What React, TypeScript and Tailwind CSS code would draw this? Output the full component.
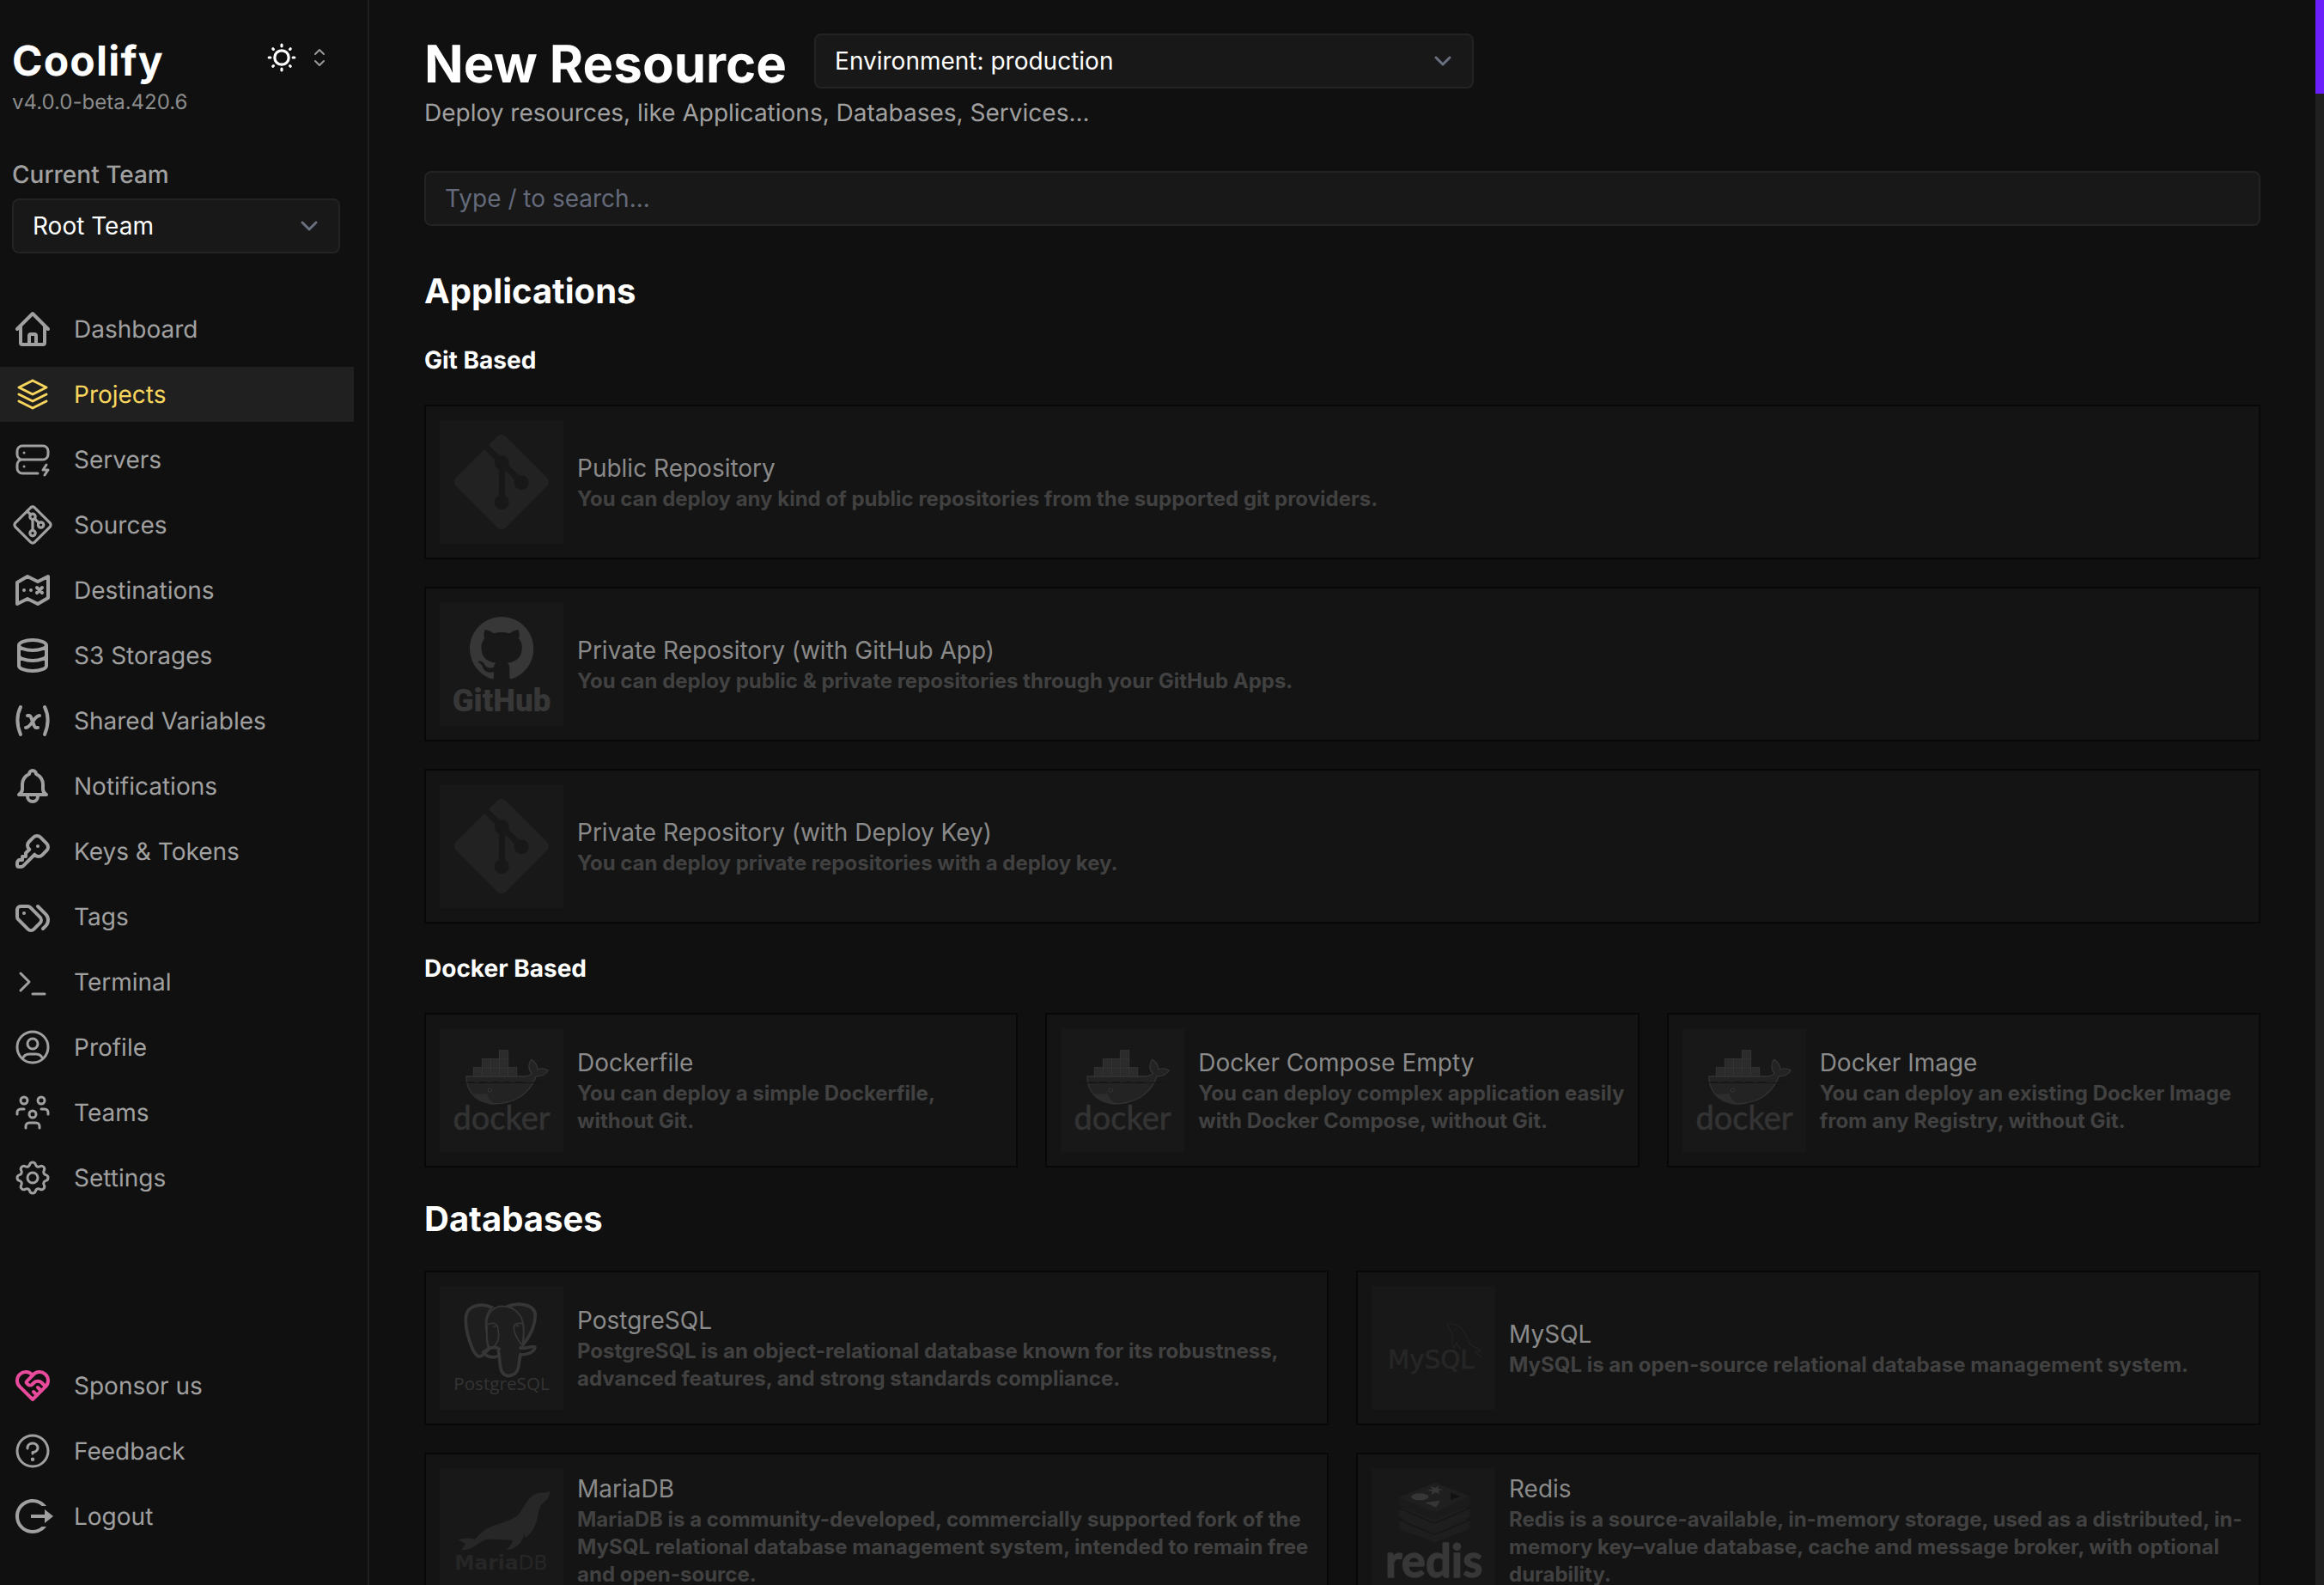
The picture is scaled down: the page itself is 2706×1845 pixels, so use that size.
import type { ReactNode } from "react";
import { SiGit, SiGithub } from "react-icons/si";
import { PiQuestion } from "react-icons/pi";
import { RiLogoutCircleRLine } from "react-icons/ri";
import { TbHeartHandshake, TbSettings } from "react-icons/tb";

function Glyph({ stroke = 2, box = 24, children }: { stroke?: number; box?: number; children: ReactNode }) {
  return (
    <svg
      viewBox={`0 0 ${box} ${box}`}
      className="size-12 shrink-0"
      fill="none"
      stroke="currentColor"
      strokeWidth={stroke}
      strokeLinecap="round"
      strokeLinejoin="round"
      aria-hidden="true"
    >
      {children}
    </svg>
  );
}

const mainLinks: { label: string; icon: ReactNode; active?: boolean }[] = [
  {
    label: "Dashboard",
    icon: (
      <Glyph>
        <path d="M3 12l2-2m0 0l7-7 7 7M5 10v10a1 1 0 001 1h3m10-11l2 2m-2-2v10a1 1 0 01-1 1h-3m-6 0a1 1 0 001-1v-4a1 1 0 011-1h2a1 1 0 011 1v4a1 1 0 001 1m-6 0h6" />
      </Glyph>
    ),
  },
  {
    label: "Projects",
    active: true,
    icon: (
      <Glyph stroke={1.5}>
        <path d="M12 4L4 8l8 4l8-4l-8-4M4 12l8 4l8-4M4 16l8 4l8-4" />
      </Glyph>
    ),
  },
  {
    label: "Servers",
    icon: (
      <Glyph stroke={1.5}>
        <path d="M3 7a3 3 0 0 1 3-3h12a3 3 0 0 1 3 3v2a3 3 0 0 1-3 3H6a3 3 0 0 1-3-3zm12 13H6a3 3 0 0 1-3-3v-2a3 3 0 0 1 3-3h12M7 8v.01M7 16v.01M20 15l-2 3h3l-2 3" />
      </Glyph>
    ),
  },
  {
    label: "Sources",
    icon: (
      <Glyph stroke={1} box={15}>
        <path d="M6.793 1.207L1.207 6.793a1 1 0 0 0 0 1.414l5.586 5.586a1 1 0 0 0 1.414 0l5.586-5.586a1 1 0 0 0 0-1.414L8.207 1.207a1 1 0 0 0-1.414 0z" />
        <path d="M5.5 2.5l1.3 1.3M8.2 5.2l1.6 1.6M7.5 5.5v4" />
        <circle cx="7.5" cy="4.5" r="1" />
        <circle cx="10.5" cy="7.5" r="1" />
        <circle cx="7.5" cy="10.5" r="1" />
      </Glyph>
    ),
  },
  {
    label: "Destinations",
    icon: (
      <Glyph>
        <path d="M9 4L3 7.5V20l6-3l6 3l6-3.5V4l-6 3zM7 12v.01M11 12v.01M14.5 10.5l3 3M17.5 10.5l-3 3" />
      </Glyph>
    ),
  },
  {
    label: "S3 Storages",
    icon: (
      <Glyph>
        <path d="M4 6a8 3 0 1 0 16 0a8 3 0 1 0-16 0M4 6v6a8 3 0 0 0 16 0V6M4 12v6a8 3 0 0 0 16 0v-6" />
      </Glyph>
    ),
  },
  {
    label: "Shared Variables",
    icon: (
      <Glyph>
        <path d="M5 4C2.5 9 2.5 14 5 20M19 4c2.5 5 2.5 10 0 16M9 9h1c1 0 1 1 2.016 3.527C13 15 13 16 14 16h1M8 16c1.5 0 3-2 4-3.5S14.5 9 16 9" />
      </Glyph>
    ),
  },
  {
    label: "Notifications",
    icon: (
      <Glyph>
        <path d="M10 5a2 2 0 1 1 4 0a7 7 0 0 1 4 6v3a4 4 0 0 0 2 3H4a4 4 0 0 0 2-3v-3a7 7 0 0 1 4-6M9 17v1a3 3 0 0 0 6 0v-1" />
      </Glyph>
    ),
  },
  {
    label: "Keys & Tokens",
    icon: (
      <Glyph>
        <path d="M16.555 3.843l3.602 3.602a2.877 2.877 0 0 1 0 4.069l-2.643 2.643a2.877 2.877 0 0 1-4.069 0l-.301-.301-6.558 6.558a2 2 0 0 1-1.239.578L5.172 21H4a1 1 0 0 1-.993-.883L3 20v-1.172a2 2 0 0 1 .467-1.284l.119-.13L4 17h2v-2h2v-2l2.144-2.144-.301-.301a2.877 2.877 0 0 1 0-4.069l2.643-2.643a2.877 2.877 0 0 1 4.069 0zM15 9h.01" />
      </Glyph>
    ),
  },
  {
    label: "Tags",
    icon: (
      <Glyph>
        <path d="M3 8v4.172a2 2 0 0 0 .586 1.414l5.71 5.71a2.41 2.41 0 0 0 3.408 0l3.592-3.592a2.41 2.41 0 0 0 0-3.408l-5.71-5.71A2 2 0 0 0 9.172 6H5a2 2 0 0 0-2 2M18 19l1.592-1.592a4.82 4.82 0 0 0 0-6.816L15 6M7 10h-.01" />
      </Glyph>
    ),
  },
  {
    label: "Terminal",
    icon: (
      <Glyph stroke={1.5}>
        <path d="M5 7l5 5l-5 5M12 19h7" />
      </Glyph>
    ),
  },
  {
    label: "Profile",
    icon: (
      <Glyph stroke={1.5}>
        <path d="M3 12a9 9 0 1 0 18 0a9 9 0 1 0-18 0M9 10a3 3 0 1 0 6 0a3 3 0 1 0-6 0M6.168 18.849A4 4 0 0 1 10 16h4a4 4 0 0 1 3.834 2.855" />
      </Glyph>
    ),
  },
  {
    label: "Teams",
    icon: (
      <Glyph stroke={1.5}>
        <path d="M10 13a2 2 0 1 0 4 0a2 2 0 0 0-4 0M8 21v-1a2 2 0 0 1 2-2h4a2 2 0 0 1 2 2v1M15 5a2 2 0 1 0 4 0a2 2 0 0 0-4 0M17 10h2a2 2 0 0 1 2 2v1M5 5a2 2 0 1 0 4 0a2 2 0 0 0-4 0M3 13v-1a2 2 0 0 1 2-2h2" />
      </Glyph>
    ),
  },
  { label: "Settings", icon: <TbSettings strokeWidth={1.5} className="size-12 shrink-0" /> },
];

const footerLinks: { label: string; icon: ReactNode; active?: boolean }[] = [
  { label: "Sponsor us", icon: <TbHeartHandshake strokeWidth={2} className="size-12 shrink-0 text-[#e84a9c]" /> },
  { label: "Feedback", icon: <PiQuestion className="size-12 shrink-0" /> },
  { label: "Logout", icon: <RiLogoutCircleRLine className="size-12 shrink-0" /> },
];

function NavList({ items }: { items: typeof mainLinks }) {
  return (
    <ul className="flex flex-col gap-3">
      {items.map((item) => (
        <li key={item.label}>
          <a
            href="#"
            aria-current={item.active ? "page" : undefined}
            className={
              item.active
                ? "flex h-16 items-center gap-6 bg-[#202020] pl-3.5 text-[#f8d65e]"
                : "flex h-16 items-center gap-6 pl-3.5 text-[#a0a0a0]"
            }
          >
            {item.icon}
            {item.label}
          </a>
        </li>
      ))}
    </ul>
  );
}

function SelectBox({ id, value, label }: { id: string; value: string; label?: string }) {
  return (
    <div className="relative">
      <select
        id={id}
        aria-label={label}
        className="h-16 w-full appearance-none rounded-lg border-2 border-[#232323] bg-[#181818] pl-[22px] pr-16 text-white outline-none"
      >
        <option>{value}</option>
      </select>
      <svg
        viewBox="0 0 20 20"
        className="pointer-events-none absolute top-3 right-4 size-10 text-[#6b7080]"
        fill="none"
        stroke="currentColor"
        strokeWidth="1.5"
        strokeLinecap="round"
        strokeLinejoin="round"
        aria-hidden="true"
      >
        <path d="M6 8l4 4 4-4" />
      </svg>
    </div>
  );
}

function Sidebar() {
  return (
    <aside className="flex h-full w-[430px] shrink-0 flex-col border-r-2 border-[#202020] pt-[39px] pb-12">
      <div className="flex items-start justify-between pr-11 pl-3.5">
        <div>
          <p className="text-5xl leading-[64px] font-bold tracking-wide text-white">Coolify</p>
          <p className="text-2xl text-[#8c8c8c]">v4.0.0-beta.420.6</p>
        </div>
        <button type="button" aria-label="Theme" className="mt-2 flex items-center gap-3">
          <svg viewBox="0 0 40 40" className="size-10 text-white" fill="none" stroke="currentColor" strokeWidth="3.2" strokeLinecap="round">
            <circle cx="20" cy="20" r="8.2" />
            <path d="M20 5.2v1.6M20 33.2v1.6M5.2 20h1.6M33.2 20h1.6M9.8 9.8l.6.6M29.6 29.6l.6.6M9.8 30.2l.6-.6M29.6 10.4l.6-.6" />
          </svg>
          <svg viewBox="0 0 24 24" className="size-6 text-[#999999]" fill="none" stroke="currentColor" strokeWidth="2" strokeLinecap="round" strokeLinejoin="round">
            <path d="M7 8l5-5l5 5M7 16l5 5l5-5" />
          </svg>
        </button>
      </div>

      <div className="mt-12 flex flex-col gap-2 pr-8 pl-3.5">
        <label htmlFor="team" className="font-medium text-[#a0a0a0]">
          Current Team
        </label>
        <SelectBox id="team" value="Root Team" />
      </div>

      <nav className="mt-14 flex flex-1 flex-col justify-between pr-4">
        <NavList items={mainLinks} />
        <NavList items={footerLinks} />
      </nav>
    </aside>
  );
}

function Logo({ children }: { children: ReactNode }) {
  return (
    <svg viewBox="0 0 432 432" className="size-36 shrink-0 bg-[#181818]" aria-hidden="true">
      {children}
    </svg>
  );
}

const gitLogo = (
  <Logo>
    <SiGit x={51} y={51} size={330} color="#222222" />
  </Logo>
);

const githubLogo = (
  <Logo>
    <SiGithub x={105} y={48} size={223} color="#373737" />
    <text x="216" y="382" textAnchor="middle" fontFamily="Roboto, sans-serif" fontWeight="900" fontSize="110" fill="#373737">
      GitHub
    </text>
  </Logo>
);

const dockerCells: [number, number][] = [
  [118, 137], [148, 137], [178, 137], [208, 137], [238, 137],
  [148, 107], [178, 107], [208, 107],
  [208, 77],
];

const dockerLogo = (
  <Logo>
    <path
      d="M93 168H285Q310 168 322 158Q302 135 320 109Q341 122 342 144Q360 136 379 147Q366 168 336 168Q322 210 280 240Q240 264 184 264Q132 258 108 222Q92 196 93 168Z"
      fill="#232323"
      stroke="#333333"
      strokeWidth="4"
    />
    <path d="M110 229Q140 232 164 227Q170 250 192 262Q138 266 110 229Z" fill="#2d2d2d" />
    <path d="M56 192Q74 182 92 190Q112 182 128 190Q152 180 172 190Q194 180 214 190Q236 180 256 190Q278 182 300 190Q330 190 350 184L372 192Z" fill="#161616" />
    {dockerCells.map(([x, y]) => (
      <g key={`${x}-${y}`}>
        <rect x={x} y={y} width="31" height="31" fill="#2a2a2a" stroke="#353535" strokeWidth="3" />
        <path d={`M${x + 10} ${y + 5}v21M${x + 16} ${y + 5}v21M${x + 22} ${y + 5}v21`} stroke="#323232" strokeWidth="2" />
      </g>
    ))}
    <circle cx="175" cy="216" r="6" fill="#1a1a1a" stroke="#3a3a3a" strokeWidth="3" />
    <text x="216" y="354" textAnchor="middle" fontFamily="Lato, sans-serif" fontSize="114" fill="#333333" stroke="#333333" strokeWidth="2">
      docker
    </text>
  </Logo>
);

const postgresLogo = (
  <Logo>
    <g fill="#1e1e1e" stroke="#363636" strokeWidth="11" strokeLinecap="round" strokeLinejoin="round">
      <path d="M186 76C150 60 100 62 92 104C86 150 112 230 132 244C146 252 156 234 172 220L164 140C162 110 172 88 186 76Z" />
      <path d="M236 72C270 56 330 62 334 100C334 145 308 185 290 207L290 140C286 110 262 80 236 72Z" />
      <path d="M186 76C200 68 222 68 236 72C270 84 290 110 290 140C296 165 290 190 284 215V240C280 270 284 312 240 314C206 310 212 270 205 232L172 215L164 140C162 110 172 88 186 76Z" stroke="none" />
      <path d="M205 228C214 260 202 310 240 314C284 310 274 265 282 240" fill="none" />
      <path d="M282 216C300 222 320 206 333 213C330 234 300 240 282 239" fill="none" />
      <path d="M160 240C176 252 192 250 205 244M152 232L172 218Q196 210 208 220" fill="none" />
    </g>
    <g fill="none" stroke="#363636" strokeWidth="5" strokeLinecap="round">
      <path d="M174 213C154 190 170 170 164 135C162 95 190 72 216 70C262 70 290 105 291 135C296 165 290 185 289 207" />
      <path d="M164 136C182 126 204 124 205 160C210 190 198 198 190 212M292 131C264 126 258 136 259 150C264 180 278 195 288 206" />
      <path d="M188 141h8M268 139h8" />
    </g>
    <text x="216" y="364" textAnchor="middle" fontFamily="'Open Sans', sans-serif" fontSize="62" fill="#343434">
      PostgreSQL
    </text>
  </Logo>
);

const mysqlLogo = (
  <Logo>
    <g fill="none" stroke="#212121" strokeWidth="4" strokeLinecap="round" strokeLinejoin="round">
      <path d="M312 220C304 212 296 206 297 196C292 202 290 210 290 216C276 208 282 190 284 180C282 164 268 146 264 132C268 126 282 134 288 134C318 142 332 174 342 200C350 212 372 214 382 228C374 230 366 228 360 230C368 236 376 240 384 248" />
      <path d="M290 150l4 4" />
    </g>
    <text x="208" y="289" textAnchor="middle" fontFamily="'DejaVu Sans', sans-serif" fontSize="88" fill="#262626" stroke="#262626" strokeWidth="2">
      MySQL
    </text>
  </Logo>
);

const mariaLogo = (
  <Logo>
    <path
      d="M384 80C388 108 362 116 352 132C342 156 344 200 310 235L298 243Q298 238 296 230C288 262 262 286 232 285Q252 268 254 252C215 250 180 246 160 250C130 262 114 290 76 285L90 265L66 250Q90 240 122 248C140 235 150 212 190 200C240 184 268 174 280 155C300 125 315 92 345 86Q365 88 384 80Z"
      fill="#272727"
    />
    <text x="214" y="353" textAnchor="middle" fontFamily="'DejaVu Sans', sans-serif" fontSize="70" fill="#262626">
      <tspan fontWeight="700">Maria</tspan>
      <tspan fontWeight="400">DB</tspan>
    </text>
  </Logo>
);

const redisLogo = (
  <Logo>
    <path d="M96 184L222 142L343 184V212L230 256Q220 260 210 256L96 212Z" fill="#1e1e1e" />
    <path d="M96 180L210 228Q220 232 230 228L343 180" fill="none" stroke="#171717" strokeWidth="5" />
    <path d="M96 142L222 100L343 142V170L230 216Q220 220 210 216L96 170Z" fill="#1e1e1e" />
    <path d="M96 139L210 188Q220 192 230 188L343 139" fill="none" stroke="#171717" strokeWidth="5" />
    <path d="M96 101L212 54Q222 50 232 54L343 98V130L230 176Q220 180 210 176L96 130Z" fill="#1b1b1b" />
    <path d="M96 101L212 54Q222 50 232 54L343 98L230 150Q220 154 210 150Z" fill="#1f1f1f" />
    <ellipse cx="169" cy="100" rx="31" ry="12" fill="#363636" />
    <path d="M224 85l-16 8l4-11l-19-6l20-2l-6-10l15 5l13-7l-2 10l18 3l-17 4l4 12z" fill="#363636" />
    <path d="M186 120L240 113L225 137Z" fill="#363636" />
    <path d="M276 85L309 99L276 112Z" fill="#111111" />
    <text x="218" y="380" textAnchor="middle" fontFamily="Lato, sans-serif" fontWeight="700" fontSize="158" fill="#373737" stroke="#373737" strokeWidth="4" strokeLinejoin="round">
      redis
    </text>
  </Logo>
);

type Resource = { title: string; text: string; logo: ReactNode };

const gitBased: Resource[] = [
  { title: "Public Repository", text: "You can deploy any kind of public repositories from the supported git providers.", logo: gitLogo },
  { title: "Private Repository (with GitHub App)", text: "You can deploy public & private repositories through your GitHub Apps.", logo: githubLogo },
  { title: "Private Repository (with Deploy Key)", text: "You can deploy private repositories with a deploy key.", logo: gitLogo },
];

const dockerBased: Resource[] = [
  { title: "Dockerfile", text: "You can deploy a simple Dockerfile, without Git.", logo: dockerLogo },
  { title: "Docker Compose Empty", text: "You can deploy complex application easily with Docker Compose, without Git.", logo: dockerLogo },
  { title: "Docker Image", text: "You can deploy an existing Docker Image from any Registry, without Git.", logo: dockerLogo },
];

const databases: Resource[] = [
  { title: "PostgreSQL", text: "PostgreSQL is an object-relational database known for its robustness, advanced features, and strong standards compliance.", logo: postgresLogo },
  { title: "MySQL", text: "MySQL is an open-source relational database management system.", logo: mysqlLogo },
  { title: "MariaDB", text: "MariaDB is a community-developed, commercially supported fork of the MySQL relational database management system, intended to remain free and open-source.", logo: mariaLogo },
  { title: "Redis", text: "Redis is a source-available, in-memory storage, used as a distributed, in-memory key–value database, cache and message broker, with optional durability.", logo: redisLogo },
];

function Card({ title, text, logo }: Resource) {
  return (
    <button type="button" className="flex items-center gap-4 border-2 border-[#080808] bg-[#141414] py-4 pr-3 pl-4 text-left">
      {logo}
      <span className="flex min-w-0 flex-col">
        <span className="text-[#8a8a8a]">{title}</span>
        <span className="text-2xl font-bold text-[#414141]">{text}</span>
      </span>
    </button>
  );
}

export default function App() {
  return (
    <div className="flex h-screen overflow-hidden bg-[#101010] font-['Inter',sans-serif] text-[28px] leading-10 antialiased [font-optical-sizing:none] [text-rendering:geometricPrecision]">
      <Sidebar />
      <main className="min-w-0 flex-1 overflow-hidden px-16 pt-[39px]">
        <div className="flex items-start gap-8">
          <h1 className="text-6xl leading-[72px] font-bold text-white">New Resource</h1>
          <div className="w-[768px]">
            <SelectBox id="environment" label="Environment" value="Environment: production" />
          </div>
        </div>
        <p className="text-[#a0a0a0]">Deploy resources, like Applications, Databases, Services...</p>
        <input
          type="search"
          aria-label="Search resources"
          placeholder="Type / to search..."
          className="mt-12 h-16 w-full rounded-lg border-2 border-[#232323] bg-[#181818] px-[22px] text-white outline-none placeholder:text-[#646a7a]"
        />

        <section className="mt-12 flex flex-col gap-8">
          <h2 className="text-[40px] leading-[56px] font-bold text-white">Applications</h2>
          <h3 className="font-bold text-white">Git Based</h3>
          <div className="grid grid-cols-1 gap-8">
            {gitBased.map((item) => (
              <Card key={item.title} {...item} />
            ))}
          </div>
          <h3 className="font-bold text-white">Docker Based</h3>
          <div className="grid grid-cols-3 gap-8">
            {dockerBased.map((item) => (
              <Card key={item.title} {...item} />
            ))}
          </div>
        </section>

        <section className="mt-8 flex flex-col gap-8">
          <h2 className="text-[40px] leading-[56px] font-bold text-white">Databases</h2>
          <div className="grid grid-cols-2 gap-8">
            {databases.map((item) => (
              <Card key={item.title} {...item} />
            ))}
          </div>
        </section>
      </main>
      <div className="w-2.5 shrink-0 bg-[#202020]">
        <div className="h-[109px] bg-[#6b1ffa]" />
      </div>
    </div>
  );
}
